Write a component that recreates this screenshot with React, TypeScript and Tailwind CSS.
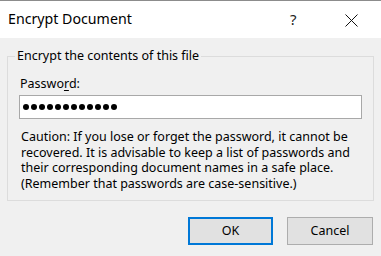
import React from 'react';

export default function App() {
  const font = { fontFamily: '"Noto Sans", "Open Sans", sans-serif' };
  return (
    <div className="w-[381px] h-[256px] overflow-hidden bg-[#f0f0f0] border-t border-[#8c8c8c] text-black" style={font}>
      {/* Title bar */}
      <div className="h-[37px] bg-white flex items-center relative">
        <span className="pl-[8px] text-[14.2px] leading-none">Encrypt Document</span>
        <span className="absolute left-[290px] top-[11px] text-[15px] leading-none text-[#222]">?</span>
        <svg className="absolute left-[345px] top-[13px]" width="13" height="13" viewBox="0 0 13 13">
          <path d="M0.5 0.5 L12.5 12.5 M12.5 0.5 L0.5 12.5" stroke="#111" strokeWidth="1" fill="none" />
        </svg>
      </div>

      {/* Body */}
      <div className="px-[7px] pt-[10px]">
        <fieldset className="w-[367px] border border-[#dcdcdc] pl-[7px] pr-[11px] pb-[9px]">
          <legend className="px-[2px] text-[12.5px] leading-[16px]">Encrypt the contents of this file</legend>
          <div className="pl-[4px]">
            <div className="mt-[12px] pl-[1px] text-[12.5px] leading-[16px]">
              Passwo<span className="underline underline-offset-2">r</span>d:
            </div>
            <div className="mt-[3px] h-[24px] w-[343px] bg-white border border-[#a8a8a8] flex items-center pl-[3px] gap-[2px]">
              {Array.from({ length: 12 }).map((_, i) => (
                <span key={i} className="w-[6px] h-[6px] rounded-full bg-black" />
              ))}
            </div>
            <p className="mt-[10px] pl-[2px] text-[12.5px] leading-[15.5px]">
              Caution: If you lose or forget the password, it cannot be
              <br />
              recovered. It is advisable to keep a list of passwords and
              <br />
              their corresponding document names in a safe place.
              <br />
              (Remember that passwords are case-sensitive.)
            </p>
          </div>
        </fieldset>
      </div>

      {/* Buttons */}
      <div className="flex justify-end gap-[14px] pr-[8px] mt-[16px]">
        <button className="w-[85px] h-[28px] bg-[#e1e1e1] border-2 border-[#0078d7] text-[12.5px]">OK</button>
        <button className="w-[86px] h-[28px] bg-[#e1e1e1] border border-[#adadad] text-[12.5px]">Cancel</button>
      </div>
    </div>
  );
}
